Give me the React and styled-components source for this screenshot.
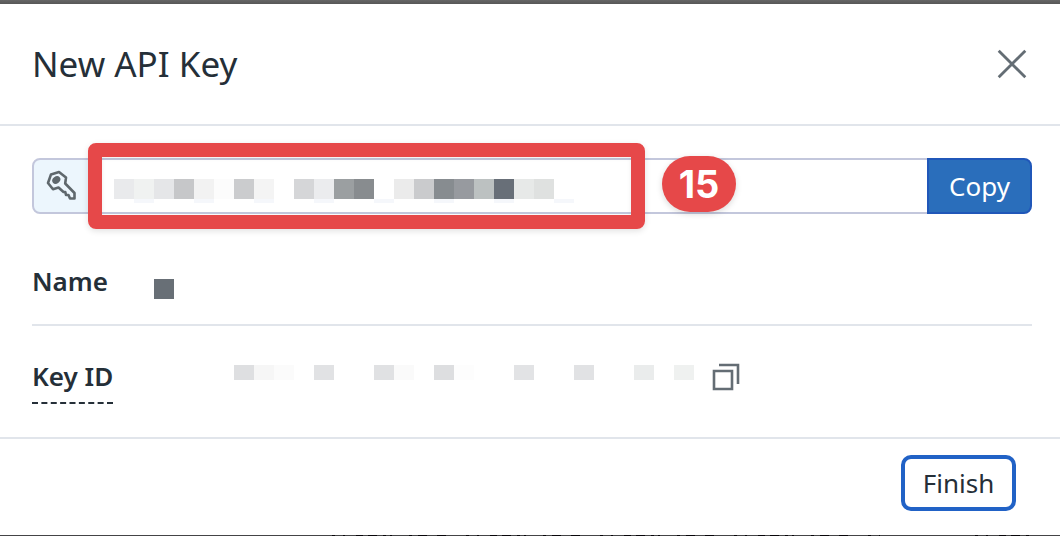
import React from "react";
import styled, { createGlobalStyle } from "styled-components";

const GlobalStyle = createGlobalStyle`
  * { box-sizing: border-box; }
  body {
    margin: 0;
    background: #444446;
    color: #252f38;
    font-family: "Noto Sans", "Open Sans", sans-serif;
    font-size: 26px;
    line-height: 36px;
  }
  button, input { font: inherit; }
`;

const Page = styled.div`
  min-height: 100vh;
  display: flex;
  flex-direction: column;
`;

const TopShade = styled.div`
  height: 4px;
  background: linear-gradient(#666666, #575757);
`;

const Dialog = styled.section`
  flex: 1;
  display: flex;
  flex-direction: column;
  background: #ffffff;
`;

const Header = styled.header`
  display: flex;
  align-items: center;
  justify-content: space-between;
  height: 122px;
  padding: 0 32px;
  border-bottom: 2px solid #e1e5eb;
`;

const Title = styled.h1`
  margin: 0;
  font-size: 35px;
  line-height: 48px;
  font-weight: 400;
`;

const IconButton = styled.button`
  display: flex;
  padding: 0;
  border: 0;
  background: none;
  color: #646d74;
  cursor: pointer;
`;

const Body = styled.div`
  padding: 32px 28px 0 32px;
`;

const KeyField = styled.div`
  position: relative;
  display: flex;
  height: 56px;
`;

const Addon = styled.label`
  display: flex;
  align-items: center;
  width: 60px;
  padding: 0 0 2px 12px;
  border: 2px solid #c3c7dc;
  border-right-width: 1px;
  border-radius: 8px 0 0 8px;
  background: #ecf6fd;
  color: #5f686d;
`;

const KeyInput = styled.input`
  flex: 1;
  min-width: 0;
  padding: 0 20px;
  border: 2px solid #c3c7dc;
  border-width: 2px 0;
  background: #ffffff;
  outline: none;
`;

const CopyButton = styled.button`
  width: 105px;
  padding: 0;
  border: 2px solid #2057b9;
  border-radius: 0 8px 8px 0;
  background: #2a6ebb;
  color: #ffffff;
  cursor: pointer;
`;

const Highlight = styled.div`
  position: absolute;
  left: 56px;
  top: -15px;
  width: 557px;
  height: 86px;
  padding: 22px 12px;
  border: 14px solid #e64849;
  border-radius: 8px;
  box-shadow: 0 2px 6px rgba(0, 0, 0, 0.12), inset 0 1px 4px rgba(0, 0, 0, 0.08);
  pointer-events: none;
`;

const StepBadge = styled.span`
  position: absolute;
  left: 630px;
  top: -2px;
  width: 74px;
  height: 56px;
  border-radius: 28px;
  background: #e64849;
  box-shadow: 0 2px 6px rgba(0, 0, 0, 0.15);
  color: #ffffff;
  font-family: Inter, sans-serif;
  font-optical-sizing: none;
  font-size: 38px;
  line-height: 56px;
  font-weight: 700;
  text-align: center;
`;

const Mosaic = styled.div`
  display: flex;
`;

const Cell = styled.span`
  width: 20px;
  height: ${(p) => p.$height}px;
  background: ${(p) => p.$color || "transparent"};
`;

const Details = styled.dl`
  margin: 0;
`;

const DetailRow = styled.div`
  display: flex;
  align-items: flex-start;
  padding: ${(p) => (p.$divided ? "50px 0 24px" : "33px 0")};
  border-bottom: ${(p) => (p.$divided ? "2px solid #e1e5eb" : "0")};
`;

const Term = styled.dt`
  width: ${(p) => p.$width}px;
  line-height: 34px;
  font-weight: 600;
`;

const HelpTerm = styled.span`
  display: inline-block;
  height: 45px;
  border-bottom: 2px dashed #252f38;
`;

const Value = styled.dd`
  display: flex;
  align-items: center;
  gap: 18px;
  height: 36px;
  margin: 0;
`;

const MaskedName = styled.div`
  padding-top: 14px;
`;

const MaskedId = styled.div`
  padding-bottom: 10px;
`;

const Footer = styled.footer`
  display: flex;
  flex: 1;
  align-items: flex-start;
  justify-content: flex-end;
  padding: 16px 44px 24px;
  border-top: 2px solid #e1e5eb;
`;

const FinishButton = styled.button`
  width: 115px;
  height: 56px;
  padding: 0;
  border: 4px solid #2162c6;
  border-radius: 10px;
  background: #ffffff;
  color: #252f38;
  cursor: pointer;
`;

const BackdropEdge = styled.svg`
  display: block;
  width: 100%;
  height: 1px;
`;

const keyCells = [
  "#e9eaec", "#f0f2f1", "#e5e6e8", "#c6c7c9", "#f2f2f2", "#fcfcfc",
  "#cbccce", "#f4f4f4", null, "#d5d6d8", "#ebecee", "#9b9fa1",
  "#888c8f", null, "#ebebeb", "#cacbcd", "#878c90", "#979a9f",
  "#bcc1c1", "#686f78", "#e7e9e8", "#dfe1e0", null,
];
const tailColumns = [1, 4, 7, 10, 13, 16, 19, 22];
const keyTails = keyCells.map((_, i) => (tailColumns.includes(i) ? "#f5f7fb" : null));
const idCells = [
  "#dedfe1", "#f6f6f6", "#fbfbfb", null, "#e1e2e4", null, null,
  "#e0e1e3", "#fafafa", null, "#dddee0", "#fdfdfd", null, null,
  "#e2e3e5", null, null, "#e1e2e4", null, null, "#eaecec", null, "#eff1f0",
];

function MaskedText({ cells, height }) {
  return (
    <Mosaic>
      {cells.map((color, i) => (
        <Cell key={i} $color={color} $height={height} />
      ))}
    </Mosaic>
  );
}

function KeyIcon() {
  return (
    <svg width="30" height="30" viewBox="0 0 30 30" fill="none" aria-hidden="true">
      <path
        d="M13 2 5 4.4 2 13 7 19.2 12.5 17.5 17.5 22 19.3 22 20 25 22.5 25 24 28.5 28.5 28.5 28.5 23 19.2 13.5 20 7.5Z"
        stroke="currentColor"
        strokeWidth="2.6"
        strokeLinejoin="round"
      />
      <ellipse cx="10.3" cy="10" rx="4.3" ry="3.5" transform="rotate(-38 10.3 10)" fill="currentColor" />
    </svg>
  );
}

export default function App() {
  return (
    <>
      <GlobalStyle />
      <Page>
        <TopShade />
        <Dialog role="dialog" aria-labelledby="dialog-title">
          <Header>
            <Title id="dialog-title">New API Key</Title>
            <IconButton type="button" aria-label="Close">
              <svg width="32" height="32" viewBox="0 0 32 32" fill="none" stroke="currentColor" strokeWidth="2.8">
                <path d="M2.7 2.7 29.3 29.3M29.3 2.7 2.7 29.3" />
              </svg>
            </IconButton>
          </Header>
          <Body>
            <KeyField>
              <Addon htmlFor="api-key">
                <KeyIcon />
              </Addon>
              <KeyInput id="api-key" aria-label="API key" readOnly />
              <CopyButton type="button">Copy</CopyButton>
              <Highlight>
                <MaskedText cells={keyCells} height={20} />
                <MaskedText cells={keyTails} height={4} />
              </Highlight>
              <StepBadge>15</StepBadge>
            </KeyField>
            <Details>
              <DetailRow $divided>
                <Term $width={122}>Name</Term>
                <Value>
                  <MaskedName>
                    <MaskedText cells={["#686f76"]} height={20} />
                  </MaskedName>
                </Value>
              </DetailRow>
              <DetailRow>
                <Term $width={202}>
                  <HelpTerm>Key ID</HelpTerm>
                </Term>
                <Value>
                  <MaskedId>
                    <MaskedText cells={idCells} height={15} />
                  </MaskedId>
                  <IconButton type="button" aria-label="Copy key ID">
                    <svg width="28" height="28" viewBox="0 0 28 28" fill="none" stroke="currentColor" strokeWidth="2.6">
                      <path d="M2 8H20V26H2ZM7 2H26V21" />
                    </svg>
                  </IconButton>
                </Value>
              </DetailRow>
            </Details>
          </Body>
          <Footer>
            <FinishButton type="button">Finish</FinishButton>
          </Footer>
        </Dialog>
        <BackdropEdge aria-hidden="true">
          <path
            d="M332 .5H880M975 .5H1030"
            stroke="#08060a"
            strokeDasharray="3 8 2 11 7 5 9 6 3 4 2 17 3 6 9 10 9 20"
          />
        </BackdropEdge>
      </Page>
    </>
  );
}
